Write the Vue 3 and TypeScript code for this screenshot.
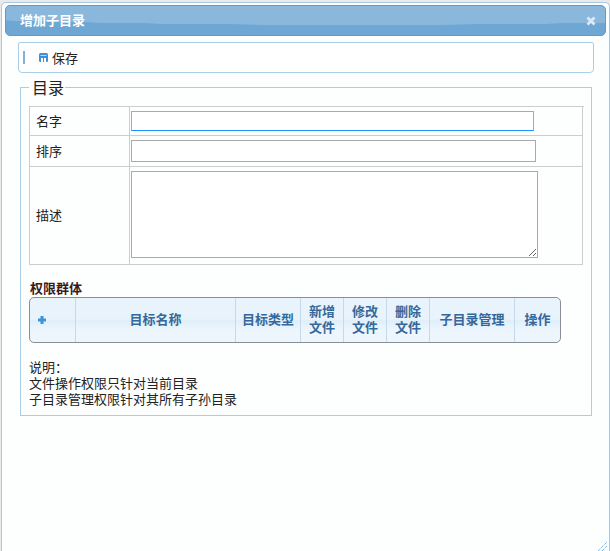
<script setup lang="ts">
const columns = [
  { label: '目标名称', width: 160 },
  { label: '目标类型', width: 65 },
  { label: '新增\n文件', width: 43 },
  { label: '修改\n文件', width: 43 },
  { label: '删除\n文件', width: 43 },
  { label: '子目录管理', width: 85 },
  { label: '操作', width: 45 },
]
</script>

<template>
  <div class="page">
    <div class="window">
      <header class="titlebar">
        <span class="title">增加子目录</span>
        <svg class="close" width="10" height="10" viewBox="0 0 10 10">
          <path d="M1.5 1.5 L8.5 8.5 M8.5 1.5 L1.5 8.5" stroke="#dfe9f5" stroke-width="2.8" />
        </svg>
      </header>

      <div class="toolbar">
        <span class="sep"></span>
        <svg class="save" width="9" height="9" viewBox="0 0 9 9">
          <rect width="9" height="9" rx="1.5" fill="#3f8fd8" />
          <rect x="1.5" y="2" width="6" height="1" fill="#bcd9f2" />
          <rect x="2" y="5" width="2" height="4" fill="#fff" />
          <rect x="5" y="5" width="2" height="4" fill="#fff" />
        </svg>
        <span class="save-text">保存</span>
      </div>

      <fieldset class="group">
        <legend>目录</legend>
        <div class="form">
          <div class="cell label row1">名字</div>
          <div class="cell value row1"><div class="fake-input focused"></div></div>
          <div class="cell label row2">排序</div>
          <div class="cell value row2"><input class="input2" type="text" /></div>
          <div class="cell label row3">描述</div>
          <div class="cell value row3"><textarea class="area"></textarea></div>
        </div>

        <div class="perm-title">权限群体</div>
        <div class="grid-head">
          <div class="hcell plus">
            <svg width="10" height="10" viewBox="0 0 10 10">
              <path d="M5 1 V9 M1 5 H9" stroke="#3f93d6" stroke-width="3" />
            </svg>
          </div>
          <div
            v-for="c in columns"
            :key="c.label"
            class="hcell"
            :style="{ width: c.width + 'px' }"
          >{{ c.label }}</div>
        </div>

        <div class="note">
          <div>说明：</div>
          <div>文件操作权限只针对当前目录</div>
          <div>子目录管理权限针对其所有子孙目录</div>
        </div>
      </fieldset>

      <svg class="grip" width="10" height="10" viewBox="0 0 10 10">
        <path d="M1 10 L10 1 M5 10 L10 5" stroke="#3f93e0" stroke-width="1" stroke-dasharray="1 1" />
      </svg>
    </div>
  </div>
</template>

<style scoped>
.page {
  width: 610px;
  height: 551px;
  overflow: hidden;
  box-sizing: border-box;
  padding: 2px 0 0 1px;
  background: #e8eaec;
  font-family: "Noto Sans CJK SC", "Liberation Sans", sans-serif;
  font-size: 13px;
  color: #222;
}
.window {
  position: relative;
  box-sizing: border-box;
  height: 549px;
  border: 1px solid #a9c9e3;
  border-bottom: 0;
  border-radius: 5px 5px 0 0;
  background: #fdfefe;
  padding: 2px 3px 0 3px;
}
.titlebar {
  position: relative;
  height: 31px;
  box-sizing: border-box;
  border: 1px solid #5b9bd0;
  border-radius: 5px;
  background:
    radial-gradient(600px 24px at 58% -5px, #89b8dc 99%, transparent 100%),
    #6ea7d3;
  display: flex;
  align-items: center;
  justify-content: space-between;
  padding: 0 9px 0 14px;
}
.title {
  color: #fff;
  font-weight: 700;
  font-size: 13px;
  line-height: 16px;
  padding-bottom: 2px;
}
.toolbar {
  display: flex;
  align-items: center;
  box-sizing: border-box;
  width: 576px;
  height: 31px;
  margin: 6px 0 0 13px;
  border: 1px solid #a9cfe8;
  border-radius: 2px 2px 4px 4px;
  background: #fff;
  padding-left: 4px;
}
.sep {
  width: 2px;
  height: 13px;
  background: #7fb2da;
}
.save {
  margin-left: 14px;
}
.save-text {
  margin-left: 4px;
  font-size: 13px;
  padding-bottom: 1px;
}
.group {
  box-sizing: border-box;
  width: 572px;
  height: 338px;
  margin: 5px 0 0 15px;
  padding: 0 8px;
  border: 1px solid #a9cfe8;
  min-width: 0;
}
legend {
  margin-left: 0;
  padding: 0 1px 0 3px;
  font-size: 16px;
  line-height: 19px;
  color: #222;
}
.form {
  display: grid;
  grid-template-columns: 100px 453px;
  grid-template-rows: 29px 31px 98px;
  margin-top: 9px;
  border: 1px solid #cdcdcd;
  border-width: 1px 0 0 1px;
  width: 554px;
}
.cell {
  box-sizing: border-box;
  border: 1px solid #cdcdcd;
  border-width: 0 1px 1px 0;
}
.label {
  display: flex;
  align-items: center;
  padding: 0 0 2px 6px;
}
.value {
  padding-left: 1px;
}
.fake-input {
  box-sizing: border-box;
  width: 403px;
  height: 20px;
  margin-top: 4px;
  border: 1px solid #aaa;
  border-bottom: 1px solid #1e90ff;
  background: #fff;
}
.input2 {
  display: block;
  box-sizing: border-box;
  width: 405px;
  height: 22px;
  margin: 4px 0 0;
  padding: 0;
  border: 1px solid #aaa;
  background: #fff;
  outline: none;
}
.area {
  display: block;
  box-sizing: border-box;
  width: 407px;
  height: 87px;
  margin: 4px 0 0;
  padding: 0;
  border: 1px solid #aaa;
  background: #fff;
  outline: none;
}
.perm-title {
  margin-top: 14px;
  padding-left: 1px;
  font-weight: 700;
  line-height: 18px;
  color: #3a1a1a;
}
.grid-head {
  display: flex;
  box-sizing: border-box;
  width: 532px;
  height: 46px;
  border: 1px solid #8a8f96;
  border-radius: 5px;
  background: linear-gradient(#e9f3fc 0 48%, #e0eefa 50%, #eef6fd 75%);
  overflow: hidden;
}
.hcell {
  box-sizing: border-box;
  border-right: 1px solid #c5d9ec;
  display: flex;
  align-items: center;
  justify-content: center;
  text-align: center;
  white-space: pre-line;
  color: #35689a;
  font-weight: 700;
  font-size: 13px;
  line-height: 16px;
  padding-bottom: 2px;
}
.hcell:last-child {
  border-right: 0;
}
.plus {
  width: 46px;
  padding: 0 22px 0 0;
}
.note {
  margin-top: 16px;
  font-size: 13px;
  line-height: 16px;
  color: #222;
}
.grip {
  position: absolute;
  right: 2px;
  bottom: 0;
}
</style>
